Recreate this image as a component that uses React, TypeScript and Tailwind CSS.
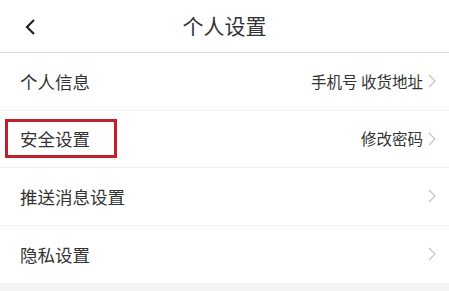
import React from 'react';

const rows = [
  { label: '个人信息', value: '手机号 收货地址' },
  { label: '安全设置', value: '修改密码', highlight: true },
  { label: '推送消息设置', value: '' },
  { label: '隐私设置', value: '' },
];

const Chevron = () => (
  <svg width="8" height="14" viewBox="0 0 8 14" fill="none" className="ml-[5px]">
    <path d="M1 1l6 6-6 6" stroke="#c4c4c4" strokeWidth="1.2" />
  </svg>
);

export default function App() {
  return (
    <div
      className="w-[449px] h-[291px] bg-[#f4f4f4] overflow-hidden"
      style={{ fontFamily: '"Noto Sans CJK SC", "Noto Sans", sans-serif' }}
    >
      {/* Header */}
      <div className="relative h-[53px] bg-white border-b border-[#dcdcdc] flex items-center justify-center">
        <button className="absolute left-[20px] top-[14px] p-1" aria-label="返回">
          <svg width="14" height="18" viewBox="0 0 14 18" fill="none">
            <path d="M10 2L3 9l7 7" stroke="#222" strokeWidth="2.2" />
          </svg>
        </button>
        <span className="text-[21px] text-[#333] leading-none -mt-[2px]">个人设置</span>
      </div>

      {/* List */}
      <div className="bg-white">
        {rows.map((row, i) => (
          <div
            key={row.label}
            className={`h-[57.5px] flex items-center justify-between pl-[20px] pr-[13px] ${
              i < rows.length - 1 ? 'border-b border-[#f0f0f0]' : ''
            }`}
          >
            <span className="relative text-[17.5px] text-[#333] leading-none">
              {row.label}
              {row.highlight && (
                <span className="absolute -left-[15px] -right-[27px] -top-[11px] -bottom-[10px] border-[3px] border-[#c0202a]" />
              )}
            </span>
            <div className="flex items-center">
              {row.value && <span className="text-[15.5px] text-[#333] leading-none">{row.value}</span>}
              <Chevron />
            </div>
          </div>
        ))}
      </div>
    </div>
  );
}
